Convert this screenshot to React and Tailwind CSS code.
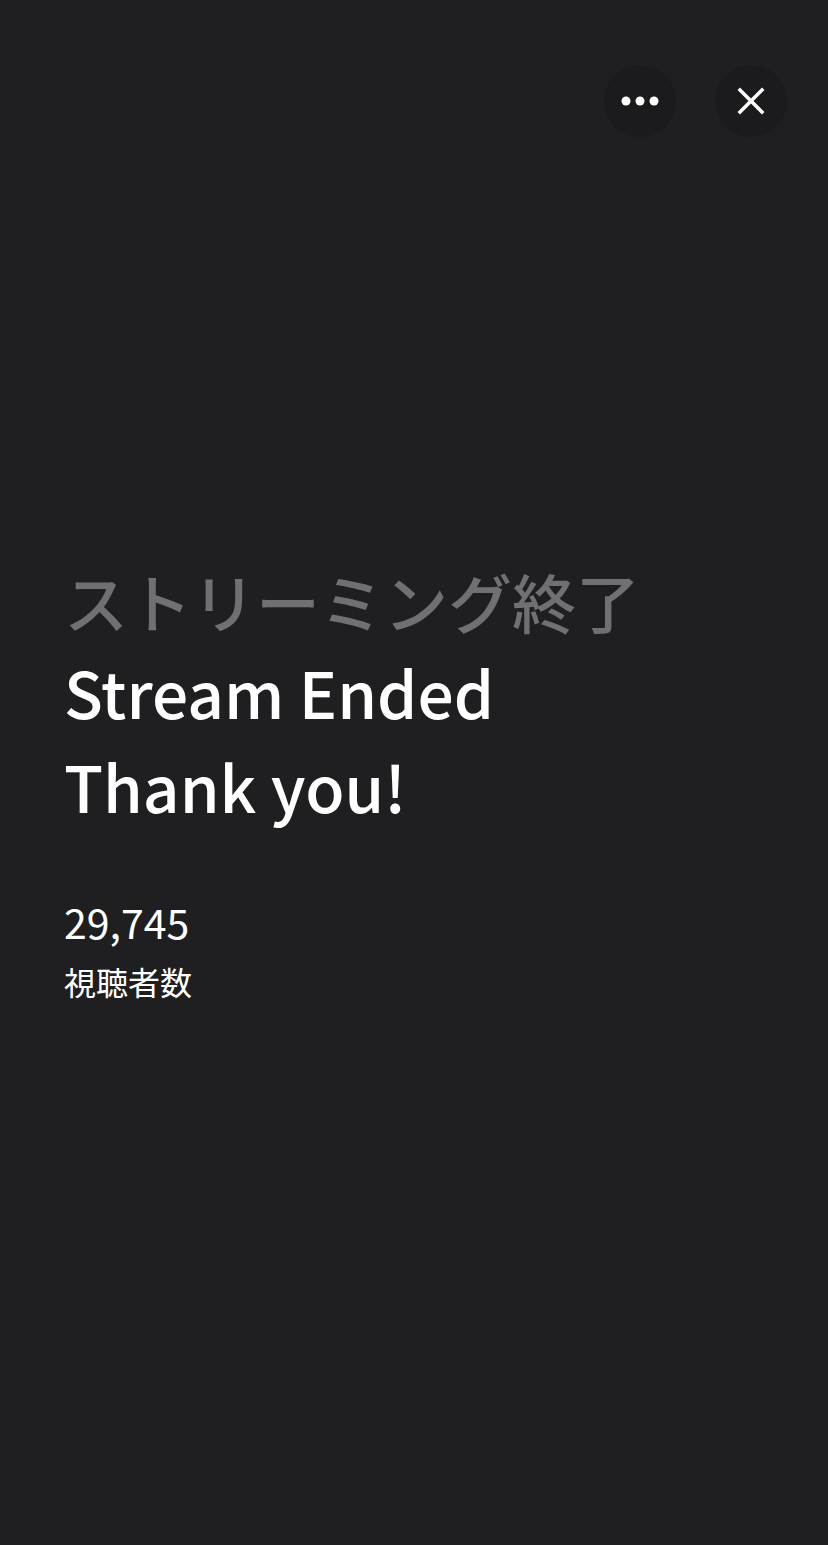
export default function App() {
  return (
    <div
      className="relative min-h-[1545px] w-full bg-[#1f1f22] text-white"
      style={{ fontFamily: '"Noto Sans CJK JP", "Noto Sans", sans-serif' }}
    >
      {/* top controls */}
      <div className="absolute right-[41px] top-[65px] flex gap-[39px]">
        <button className="flex h-[72px] w-[72px] items-center justify-center rounded-full bg-[#1b1b1d]">
          <svg width="38" height="10" viewBox="0 0 38 10" fill="#fff">
            <circle cx="5" cy="5" r="4.5" />
            <circle cx="19" cy="5" r="4.5" />
            <circle cx="33" cy="5" r="4.5" />
          </svg>
        </button>
        <button className="flex h-[72px] w-[72px] items-center justify-center rounded-full bg-[#1b1b1d]">
          <svg width="28" height="28" viewBox="0 0 28 28" stroke="#fff" strokeWidth="3.5" strokeLinecap="square">
            <line x1="3" y1="3" x2="25" y2="25" />
            <line x1="25" y1="3" x2="3" y2="25" />
          </svg>
        </button>
      </div>

      {/* content */}
      <div className="px-[64px] pt-[560px]">
        <h2 className="text-[64px] font-medium leading-[80px] text-[#707072]">ストリーミング終了</h2>
        <h1 className="mt-[4px] text-[64px] font-medium leading-[94px]">
          Stream Ended
          <br />
          Thank you!
        </h1>
        <div className="mt-[66px]">
          <div className="text-[41px] font-normal leading-[46px]">29,745</div>
          <div className="mt-[17px] text-[32px] leading-[40px]">視聴者数</div>
        </div>
      </div>
    </div>
  );
}
